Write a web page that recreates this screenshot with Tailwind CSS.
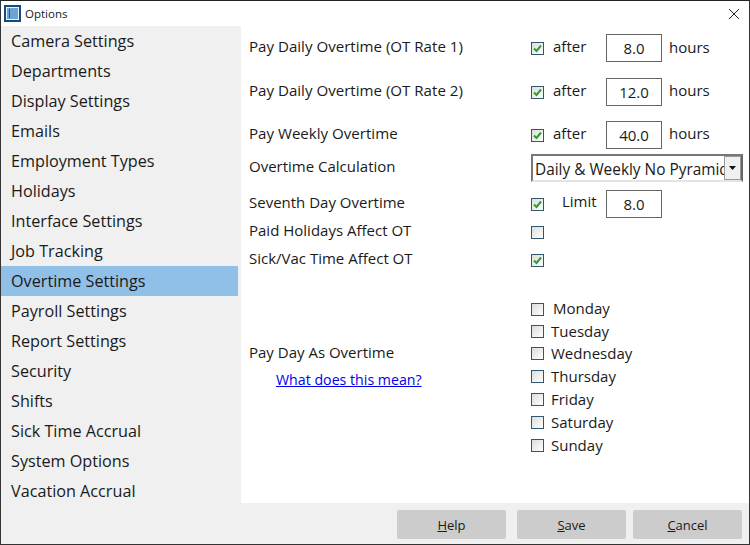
<!DOCTYPE html>
<html><head><meta charset="utf-8"><script src="https://cdn.jsdelivr.net/npm/@tailwindcss/browser@4"></script></head>
<body class="m-0 bg-white">
<div class="w-[750px] h-[545px] border border-[#333] border-t-[#222] flex flex-col bg-white overflow-hidden text-[15px] text-[#1a1a1a] font-['Open_Sans','Noto_Sans',sans-serif]">
  <div class="h-[25px] flex items-center shrink-0 pl-[3px] relative">
    <svg width="17" height="17" viewBox="0 0 17 17" class="mr-[4px]"><rect width="17" height="17" fill="#0f4c81"/><rect x="2.5" y="2.5" width="12" height="12" fill="#6fa3d0" stroke="#e8f1f8"/><rect x="5" y="4" width="1" height="9" fill="#1d5a90"/></svg>
    <span class="text-[11.5px]">Options</span>
    <svg width="12" height="12" viewBox="0 0 12 12" class="absolute right-[9px] top-[7px]"><path d="M1 1L11 11M11 1L1 11" stroke="#222" stroke-width="1" fill="none"/></svg>
  </div>
  <div class="flex h-[477px] shrink-0">
    <div class="w-[240px] bg-[#f0f0f0] shrink-0 flex flex-col pr-[3px] text-[16.2px] overflow-hidden">
      <div class="h-[30px] shrink-0 leading-[30px] pl-[10px]">Camera Settings</div>
      <div class="h-[30px] shrink-0 leading-[30px] pl-[10px]">Departments</div>
      <div class="h-[30px] shrink-0 leading-[30px] pl-[10px]">Display Settings</div>
      <div class="h-[30px] shrink-0 leading-[30px] pl-[10px]">Emails</div>
      <div class="h-[30px] shrink-0 leading-[30px] pl-[10px]">Employment Types</div>
      <div class="h-[30px] shrink-0 leading-[30px] pl-[10px]">Holidays</div>
      <div class="h-[30px] shrink-0 leading-[30px] pl-[10px]">Interface Settings</div>
      <div class="h-[30px] shrink-0 leading-[30px] pl-[10px]">Job Tracking</div>
      <div class="h-[30px] shrink-0 leading-[30px] pl-[10px] bg-[#90bfe7]">Overtime Settings</div>
      <div class="h-[30px] shrink-0 leading-[30px] pl-[10px]">Payroll Settings</div>
      <div class="h-[30px] shrink-0 leading-[30px] pl-[10px]">Report Settings</div>
      <div class="h-[30px] shrink-0 leading-[30px] pl-[10px]">Security</div>
      <div class="h-[30px] shrink-0 leading-[30px] pl-[10px]">Shifts</div>
      <div class="h-[30px] shrink-0 leading-[30px] pl-[10px]">Sick Time Accrual</div>
      <div class="h-[30px] shrink-0 leading-[30px] pl-[10px]">System Options</div>
      <div class="h-[30px] shrink-0 leading-[30px] pl-[10px]">Vacation Accrual</div>
    </div>
    <div class="flex-1 pl-[8px] pt-[8px] flex flex-col">
      <div class="flex items-center h-[28px]">
        <div class="w-[282px] -mt-[4px] text-[15.1px]">Pay Daily Overtime (OT Rate 1)</div>
        <div class="w-[13px] h-[13px] border border-[#33566e] bg-gradient-to-br from-[#dcdcdc] to-white flex items-center justify-center mt-[1px]"><svg width="9" height="9" viewBox="0 0 9 9"><path d="M1 4.5L3.5 7L8 1.5" stroke="#2e9e2e" stroke-width="2" fill="none"/></svg></div>
        <div class="w-[62px] pl-[9px] -mt-[3px]">after</div>
        <div class="w-[56px] h-[28px] border border-[#666] flex items-center justify-center">8.0</div>
        <div class="pl-[7px] -mt-[1px]">hours</div>
      </div>
      <div class="flex items-center h-[28px] mt-[16px]">
        <div class="w-[282px] -mt-[4px] text-[15.1px]">Pay Daily Overtime (OT Rate 2)</div>
        <div class="w-[13px] h-[13px] border border-[#33566e] bg-gradient-to-br from-[#dcdcdc] to-white flex items-center justify-center mt-[1px]"><svg width="9" height="9" viewBox="0 0 9 9"><path d="M1 4.5L3.5 7L8 1.5" stroke="#2e9e2e" stroke-width="2" fill="none"/></svg></div>
        <div class="w-[62px] pl-[9px] -mt-[3px]">after</div>
        <div class="w-[56px] h-[28px] border border-[#666] flex items-center justify-center">12.0</div>
        <div class="pl-[7px] -mt-[3px]">hours</div>
      </div>
      <div class="flex items-center h-[28px] mt-[15px]">
        <div class="w-[282px] -mt-[4px] text-[15.1px]">Pay Weekly Overtime</div>
        <div class="w-[13px] h-[13px] border border-[#33566e] bg-gradient-to-br from-[#dcdcdc] to-white flex items-center justify-center mt-[1px]"><svg width="9" height="9" viewBox="0 0 9 9"><path d="M1 4.5L3.5 7L8 1.5" stroke="#2e9e2e" stroke-width="2" fill="none"/></svg></div>
        <div class="w-[62px] pl-[9px] -mt-[3px]">after</div>
        <div class="w-[56px] h-[28px] border border-[#666] flex items-center justify-center">40.0</div>
        <div class="pl-[7px] -mt-[3px]">hours</div>
      </div>
      <div class="flex items-center h-[28px] mt-[5px]">
        <div class="w-[282px] -mt-[4px]">Overtime Calculation</div>
        <div class="w-[212px] h-[28px] border-2 border-t-[#777] border-l-[#777] border-r-[#666] border-b-[#e4e4e4] flex items-center relative overflow-hidden text-[15.4px]">
          <span class="pl-[2px] pt-[3px] whitespace-nowrap">Daily &amp; Weekly No Pyramid</span>
          <span class="absolute right-0 top-0 w-[17px] h-[24px] bg-[#f0f0f0] border border-[#999] flex items-center justify-center"><svg width="7" height="4" viewBox="0 0 7 4"><path d="M0 0H7L3.5 4Z" fill="#111"/></svg></span>
        </div>
      </div>
      <div class="flex items-center h-[28px] mt-[8px]">
        <div class="w-[282px] -mt-[4px]">Seventh Day Overtime</div>
        <div class="w-[13px] h-[13px] border border-[#33566e] bg-gradient-to-br from-[#dcdcdc] to-white flex items-center justify-center"><svg width="9" height="9" viewBox="0 0 9 9"><path d="M1 4.5L3.5 7L8 1.5" stroke="#2e9e2e" stroke-width="2" fill="none"/></svg></div>
        <div class="w-[62px] pl-[18px] -mt-[5px]">Limit</div>
        <div class="w-[56px] h-[28px] border border-[#666] flex items-center justify-center">8.0</div>
      </div>
      <div class="flex items-center h-[28px]">
        <div class="w-[282px] -mt-[4px]">Paid Holidays Affect OT</div>
        <div class="w-[13px] h-[13px] border border-[#33566e] bg-gradient-to-br from-[#dcdcdc] to-white"></div>
      </div>
      <div class="flex items-center h-[28px]">
        <div class="w-[282px] -mt-[4px]">Sick/Vac Time Affect OT</div>
        <div class="w-[13px] h-[13px] border border-[#33566e] bg-gradient-to-br from-[#dcdcdc] to-white flex items-center justify-center"><svg width="9" height="9" viewBox="0 0 9 9"><path d="M1 4.5L3.5 7L8 1.5" stroke="#2e9e2e" stroke-width="2" fill="none"/></svg></div>
      </div>
      <div class="flex mt-[24px]">
        <div class="w-[282px] pt-[43px]">
          <div class="h-[28px]">Pay Day As Overtime</div>
          <a class="block pl-[27px] text-[14.2px] text-[#0000ee] underline">What does this mean?</a>
        </div>
        <div class="flex flex-col">
          <div class="flex items-center h-[22px]"><div class="w-[13px] h-[13px] border border-[#33566e] bg-gradient-to-br from-[#dcdcdc] to-white mr-[9px]"></div><span class="-mt-[1px]">Monday</span></div>
          <div class="flex items-center h-[22px]"><div class="w-[13px] h-[13px] border border-[#33566e] bg-gradient-to-br from-[#dcdcdc] to-white mr-[7px]"></div>Tuesday</div>
          <div class="flex items-center h-[23px]"><div class="w-[13px] h-[13px] border border-[#33566e] bg-gradient-to-br from-[#dcdcdc] to-white mr-[7px]"></div>Wednesday</div>
          <div class="flex items-center h-[23px]"><div class="w-[13px] h-[13px] border border-[#33566e] bg-gradient-to-br from-[#dcdcdc] to-white mr-[7px]"></div>Thursday</div>
          <div class="flex items-center h-[23px]"><div class="w-[13px] h-[13px] border border-[#33566e] bg-gradient-to-br from-[#dcdcdc] to-white mr-[7px]"></div>Friday</div>
          <div class="flex items-center h-[23px]"><div class="w-[13px] h-[13px] border border-[#33566e] bg-gradient-to-br from-[#dcdcdc] to-white mr-[7px]"></div>Saturday</div>
          <div class="flex items-center h-[23px]"><div class="w-[13px] h-[13px] border border-[#33566e] bg-gradient-to-br from-[#dcdcdc] to-white mr-[7px]"></div>Sunday</div>
        </div>
      </div>
    </div>
  </div>
  <div class="flex-1 bg-[#f0f0f0] flex items-start pl-[396px] pt-[7px] text-[13px]">
    <div class="w-[109px] h-[29px] bg-[#cccccc] rounded-[2px] flex items-center justify-center pt-[2px]"><span><u>H</u>elp</span></div>
    <div class="w-[109px] h-[29px] bg-[#cccccc] rounded-[2px] flex items-center justify-center pt-[2px] ml-[11px]"><span><u>S</u>ave</span></div>
    <div class="w-[109px] h-[29px] bg-[#cccccc] rounded-[2px] flex items-center justify-center pt-[2px] ml-[7px]"><span><u>C</u>ancel</span></div>
  </div>
</div>
</body></html>
